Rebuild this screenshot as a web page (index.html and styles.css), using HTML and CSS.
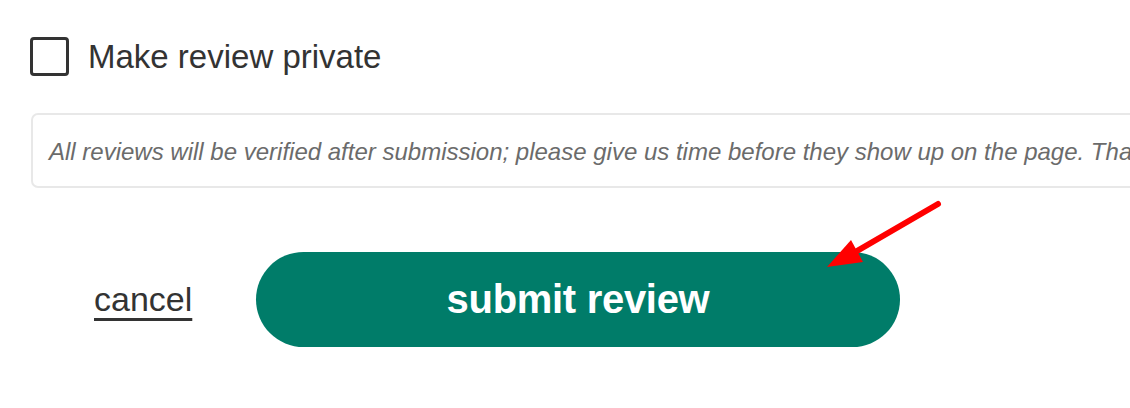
FILE: index.html
```html
<!DOCTYPE html>
<html>
<head>
    <title>Submit review</title>
    <link rel="stylesheet" href="styles.css">
</head>
<body>
    <div class="review-form">
        <label class="private-row">
            <span class="checkbox"></span>
            <span class="private-label">Make review private</span>
        </label>
        <div class="notice">
            All reviews will be verified after submission; please give us time before they show up on the page. Thank you for your patience!
        </div>
        <div class="actions">
            <a href="#" class="cancel">cancel</a>
            <button type="button" class="submit">submit review</button>
        </div>
    </div>
    <!-- annotation arrow -->
    <svg class="arrow" width="1130" height="408" viewBox="0 0 1130 408">
        <line x1="938" y1="204" x2="850" y2="255" stroke="#ff0000" stroke-width="6" stroke-linecap="round"/>
        <polygon points="827,267 851,240 863,262" fill="#ff0000"/>
    </svg>
</body>
</html>
```

FILE: styles.css
```css
body {
    font-family: "Liberation Sans", Arial, sans-serif;
    margin: 0;
    padding: 0;
    background-color: #fff;
    color: #333;
    overflow: hidden;
    width: 1130px;
    height: 408px;
    position: relative;
}
.review-form {
    padding-left: 31px;
    padding-top: 37px;
}
.private-row {
    display: flex;
    align-items: center;
    height: 39px;
}
.checkbox {
    width: 39px;
    height: 39px;
    box-sizing: border-box;
    border: 3px solid #333;
    border-radius: 4px;
    margin-left: -1px;
}
.private-label {
    margin-left: 19px;
    font-size: 33px;
    color: #333;
}
.notice {
    margin-top: 37px;
    margin-right: -60px;
    height: 75px;
    box-sizing: border-box;
    border: 2px solid #e8e8e8;
    border-radius: 7px;
    display: flex;
    align-items: center;
    padding-left: 16px;
    padding-top: 3px;
    white-space: nowrap;
    overflow: hidden;
    font-size: 24px;
    font-style: italic;
    color: #6b6b6b;
}
.actions {
    margin-top: 64px;
    display: flex;
    align-items: center;
    height: 95px;
}
.cancel {
    margin-left: 63px;
    width: 98px;
    font-size: 34px;
    color: #333;
    text-decoration: underline;
    text-decoration-thickness: 3px;
    text-underline-offset: 7px;
}
.submit {
    margin-left: 64px;
    width: 644px;
    height: 95px;
    border: none;
    border-radius: 48px;
    background-color: #007c69;
    color: #fff;
    font-family: "Liberation Sans", Arial, sans-serif;
    font-size: 40px;
    font-weight: bold;
    letter-spacing: -0.3px;
    cursor: pointer;
}
.arrow {
    position: absolute;
    left: 0;
    top: 0;
    pointer-events: none;
}
```
